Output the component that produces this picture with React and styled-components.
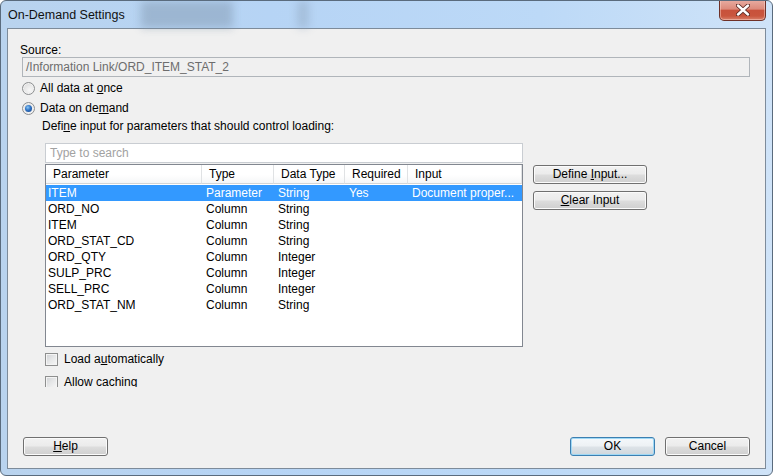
import React from 'react';
import styled, { createGlobalStyle } from 'styled-components';

const GlobalStyle = createGlobalStyle`
  html, body {
    margin: 0;
    padding: 0;
    background: #ffffff;
  }
  body {
    font-family: "Liberation Sans", Arial, sans-serif;
    font-size: 12px;
    color: #000;
  }
`;

const Window = styled.div`
  position: relative;
  box-sizing: border-box;
  width: 773px;
  height: 476px;
  display: flex;
  flex-direction: column;
  border: 1px solid #5a6b7d;
  border-radius: 6px;
  overflow: hidden;
  background: linear-gradient(90deg, #b9d3ee 0%, #b6d4f5 35%, #bcd9f7 70%, #cfe3f8 100%);
`;

const TitleBar = styled.div`
  position: relative;
  height: 27px;
  flex: none;
  display: flex;
  align-items: flex-start;
`;

const GlassBlur = styled.div`
  position: absolute;
  top: 0;
  left: ${({ $left }) => $left}px;
  width: ${({ $width }) => $width}px;
  height: 27px;
  background: ${({ $color }) => $color};
  filter: blur(4px);
  opacity: 0.45;
`;

const Title = styled.div`
  position: relative;
  padding: 7px 0 0 7px;
  font-size: 12.5px;
  line-height: 15px;
  color: #111;
`;

const CloseButton = styled.div`
  position: relative;
  margin-left: auto;
  margin-right: 6px;
  margin-top: -1px;
  box-sizing: border-box;
  width: 47px;
  height: 21px;
  border: 1px solid #6e3027;
  border-top: none;
  border-radius: 0 0 5px 5px;
  background: linear-gradient(180deg, #e8ada2 0%, #dc8a7b 45%, #c8513b 52%, #c9553d 80%, #d9806a 100%);
  box-shadow: inset 0 0 0 1px rgba(255, 220, 210, 0.45);
  display: flex;
  align-items: center;
  justify-content: center;
`;

const Client = styled.div`
  flex: 1;
  margin: 0 6px 6px 6px;
  border: 1px solid #7d8b9a;
  background: #f0f0f0;
  display: flex;
  flex-direction: column;
  min-height: 0;
`;

const Body = styled.div`
  height: 358px;
  flex: none;
  overflow: hidden;
  box-sizing: border-box;
  padding: 14px 15px 0 12px;
`;

const Label = styled.div`
  line-height: ${({ $lh }) => $lh || 16}px;
  white-space: nowrap;
`;

const SourceInput = styled.div`
  box-sizing: border-box;
  height: 20px;
  margin-left: 2px;
  border: 1px solid #b0b5ba;
  background: #f0f0f0;
  color: #6d6d6d;
  padding: 0 3px;
  line-height: 18px;
`;

const Options = styled.div`
  margin-top: 1px;
`;

const RadioRow = styled.div`
  height: 20px;
  display: flex;
  align-items: center;
  gap: 5px;
  padding-left: 2px;
`;

const Radio = styled.span`
  position: relative;
  box-sizing: border-box;
  width: 13px;
  height: 13px;
  border-radius: 50%;
  border: 1px solid #8d8f91;
  background: radial-gradient(circle at 60% 65%, #f8f8f8 0%, #e4e4e4 60%, #d2d2d2 100%);
  box-shadow: inset 0 0 0 1px #f2f2f2;

  &::after {
    content: '';
    display: ${({ $checked }) => ($checked ? 'block' : 'none')};
    position: absolute;
    left: 2px;
    top: 2px;
    width: 7px;
    height: 7px;
    border-radius: 50%;
    background: radial-gradient(circle at 40% 35%, #8cc8f6 0%, #2f73c4 45%, #173f83 100%);
  }
`;

const Indented = styled.div`
  padding-left: 22px;
`;

const SearchBox = styled.div`
  box-sizing: border-box;
  margin: 9px 0 0 3px;
  width: 478px;
  height: 20px;
  border: 1px solid #c9cdd2;
  background: #fff;
  color: #a2a2a2;
  padding: 0 4px;
  line-height: 18px;
`;

const TableRow = styled.div`
  display: flex;
  align-items: flex-start;
  gap: 10px;
  margin: 1px 0 0 3px;
`;

const Table = styled.div`
  box-sizing: border-box;
  width: 478px;
  height: 183px;
  border: 1px solid #828790;
  background: #fff;
  display: grid;
  grid-template-columns: 156px 72px 71px 63px 1fr;
  grid-template-rows: 20px;
  grid-auto-rows: 16px;
  align-content: start;
`;

const HeadCell = styled.div`
  height: 19px;
  box-sizing: border-box;
  padding-left: 7px;
  line-height: 18px;
  background: linear-gradient(180deg, #ffffff 0%, #ffffff 55%, #f5f6f7 100%);
  border-right: 1px solid #e0e2e4;
  border-bottom: 1px solid #d5d5d5;
  white-space: nowrap;
  overflow: hidden;
`;

const Cell = styled.div`
  padding-left: ${({ $first }) => ($first ? 2 : 4)}px;
  line-height: 16px;
  white-space: nowrap;
  overflow: hidden;
  background: ${({ $selected }) => ($selected ? '#3399ff' : 'transparent')};
  color: ${({ $selected }) => ($selected ? '#fff' : '#000')};
`;

const SideButtons = styled.div`
  display: flex;
  flex-direction: column;
  gap: 7px;
  padding-top: 1px;
`;

const Button = styled.div`
  box-sizing: border-box;
  width: ${({ $w }) => $w || 85}px;
  height: 19px;
  border: 1px solid ${({ $default }) => ($default ? '#3c7fb1' : '#707070')};
  border-radius: 3px;
  background: ${({ $default }) =>
    $default
      ? 'linear-gradient(180deg, #f4f8fb 0%, #edf1f4 48%, #dde3e8 52%, #cfd6dc 100%)'
      : 'linear-gradient(180deg, #f2f2f2 0%, #ebebeb 48%, #dddddd 52%, #cfcfcf 100%)'};
  box-shadow: inset 0 0 0 1px ${({ $default }) => ($default ? '#9fd8f5' : '#fbfbfb')};
  text-align: center;
  line-height: 17px;
  white-space: nowrap;
`;

const CheckList = styled.div`
  margin-top: 2px;
  margin-left: 3px;
  display: flex;
  flex-direction: column;
  gap: 3px;
`;

const CheckRow = styled.div`
  height: 20px;
  display: flex;
  align-items: center;
  gap: 6px;
`;

const Checkbox = styled.span`
  box-sizing: border-box;
  width: 13px;
  height: 13px;
  border: 1px solid #8e8f8f;
  background: linear-gradient(135deg, #cfd1d4 0%, #e6e7e8 50%, #f7f7f7 100%);
  box-shadow: inset 0 0 0 1px #f4f4f4;
`;

const Footer = styled.div`
  flex: 1;
  display: flex;
  align-items: flex-end;
  padding: 0 15px 12px 15px;
  gap: 10px;
`;

const Spacer = styled.div`
  flex: 1;
`;

const U = styled.span`
  text-decoration: underline;
  text-underline-offset: 1px;
`;

const columns = ['Parameter', 'Type', 'Data Type', 'Required', 'Input'];

const rows = [
  ['ITEM', 'Parameter', 'String', 'Yes', 'Document proper...'],
  ['ORD_NO', 'Column', 'String', '', ''],
  ['ITEM', 'Column', 'String', '', ''],
  ['ORD_STAT_CD', 'Column', 'String', '', ''],
  ['ORD_QTY', 'Column', 'Integer', '', ''],
  ['SULP_PRC', 'Column', 'Integer', '', ''],
  ['SELL_PRC', 'Column', 'Integer', '', ''],
  ['ORD_STAT_NM', 'Column', 'String', '', ''],
];

const CloseGlyph = () => (
  <svg width="14" height="12" viewBox="0 0 14 12">
    <path
      d="M2 1.5 L12 10.5 M12 1.5 L2 10.5"
      stroke="#5a2a24"
      strokeWidth="4.2"
      strokeLinecap="round"
      fill="none"
    />
    <path
      d="M2 1.5 L12 10.5 M12 1.5 L2 10.5"
      stroke="#ffffff"
      strokeWidth="2.4"
      strokeLinecap="round"
      fill="none"
    />
  </svg>
);

export default function App() {
  return (
    <>
      <GlobalStyle />
      <Window>
        <TitleBar>
          <GlassBlur $left={140} $width={92} $color="#7d93aa" />
          <GlassBlur $left={296} $width={12} $color="#8ea4bb" />
          <Title>On-Demand Settings</Title>
          <CloseButton>
            <CloseGlyph />
          </CloseButton>
        </TitleBar>

        <Client>
          <Body>
            <Label $lh={14}>Source:</Label>
            <SourceInput>/Information Link/ORD_ITEM_STAT_2</SourceInput>

            <Options>
              <RadioRow>
                <Radio />
                <span>
                  All data at <U>o</U>nce
                </span>
              </RadioRow>
              <RadioRow>
                <Radio $checked />
                <span>
                  Data on de<U>m</U>and
                </span>
              </RadioRow>
            </Options>

            <Indented>
              <Label>
                Defi<U>n</U>e input for parameters that should control loading:
              </Label>
              <SearchBox>Type to search</SearchBox>

              <TableRow>
                <Table>
                  {columns.map((c) => (
                    <HeadCell key={c}>{c}</HeadCell>
                  ))}
                  {rows.map((r, i) =>
                    r.map((v, j) => (
                      <Cell key={`${i}-${j}`} $first={j === 0} $selected={i === 0}>
                        {v}
                      </Cell>
                    ))
                  )}
                </Table>
                <SideButtons>
                  <Button $w={114}>
                    Define <U>I</U>nput...
                  </Button>
                  <Button $w={114}>
                    <U>C</U>lear Input
                  </Button>
                </SideButtons>
              </TableRow>

              <CheckList>
                <CheckRow>
                  <Checkbox />
                  <span>
                    Load a<U>u</U>tomatically
                  </span>
                </CheckRow>
                <CheckRow>
                  <Checkbox />
                  <span>Allow caching</span>
                </CheckRow>
              </CheckList>
            </Indented>
          </Body>

          <Footer>
            <Button>
              <U>H</U>elp
            </Button>
            <Spacer />
            <Button $default>OK</Button>
            <Button>Cancel</Button>
          </Footer>
        </Client>
      </Window>
    </>
  );
}
